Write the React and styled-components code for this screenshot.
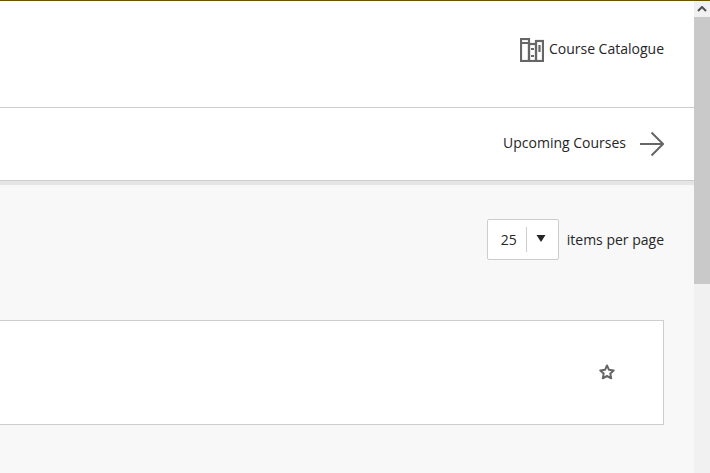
import React from 'react';
import styled, { createGlobalStyle } from 'styled-components';

const Global = createGlobalStyle`
  html, body { margin: 0; padding: 0; height: 100%; overflow: hidden; }
  #root { height: 100%; }
  * { box-sizing: border-box; }
`;
const Frame = styled.div`
  display: flex; width: 710px; height: 473px; overflow: hidden; border-top: 1px solid #6b5500;
  font-family: "Open Sans", sans-serif; font-size: 14px; color: #262626;
`;
const Page = styled.main`
  flex: 1; display: flex; flex-direction: column; min-width: 0; background: #f8f8f8;
`;
const TopBar = styled.header`
  height: 107px; flex: none; display: flex; justify-content: flex-end; align-items: flex-start;
  padding: 37px 30px 0 0; background: #fff; border-bottom: 1px solid #cdcdcd;
`;
const IconLink = styled.a`
  display: flex; align-items: center; gap: 5px; height: 24px;
`;
const LinkText = styled.span`
  line-height: 20px; margin-top: -2px;
`;
const Tabs = styled.nav`
  height: 77px; flex: none; display: flex; justify-content: flex-end; align-items: center;
  padding: 0 30px 1px 0; gap: 13px; background: #fff; border-bottom: 4px solid #e5e5e5;
  box-shadow: inset 0 -1px 0 #cdcdcd;
`;
const TabText = styled.span`
  line-height: 20px; margin-top: -2px;
`;
const Content = styled.section`
  flex: 1; display: flex; flex-direction: column; padding: 34px 30px 0 0;
`;
const Pager = styled.div`
  display: flex; justify-content: flex-end; align-items: center; gap: 8px; height: 41px;
`;
const Select = styled.div`
  width: 72px; height: 41px; display: flex; align-items: center;
  background: #fff; border: 1px solid #cdcdcd; border-radius: 2px;
`;
const Value = styled.span`
  width: 39px; text-align: center; border-right: 1px solid #cdcdcd; line-height: 25px; padding-left: 4px;
`;
const Caret = styled.span`
  flex: 1; display: flex; justify-content: center; margin: -3px 2px 0 0;
`;
const Card = styled.article`
  margin-top: 60px; height: 105px; margin-left: -10px; display: flex; justify-content: flex-end;
  align-items: center; padding: 0 48px 2px 0; background: #fff; border: 1px solid #cdcdcd;
`;
const Scrollbar = styled.aside`
  width: 16px; flex: none; display: flex; flex-direction: column; background: #f1f1f1;
`;
const ArrowButton = styled.div`
  height: 16px; flex: none; display: flex; align-items: center; justify-content: center;
`;
const Thumb = styled.div`
  height: 267px; flex: none; background: #c9c9c9;
`;

export default function App() {
  return (
    <Frame>
      <Global />
      <Page>
        <TopBar>
          <IconLink>
            <svg width="24" height="24" viewBox="0 0 24 24" fill="none" stroke="#666" strokeWidth="2.200">
              <rect x="1" y="1" width="8" height="22" />
              <rect x="9" y="6" width="7" height="17" />
              <rect x="16" y="3" width="7" height="20" />
              <path d="M1 5h8M11 11h3M11 18h3M19.500 7v7" />
            </svg>
            <LinkText>Course Catalogue</LinkText>
          </IconLink>
        </TopBar>
        <Tabs>
          <TabText>Upcoming Courses</TabText>
          <svg width="25" height="26" viewBox="0 0 25 26" fill="none" stroke="#666" strokeWidth="2">
            <path d="M1 13h23M12.500 1.500 24 13 12.500 24.500" />
          </svg>
        </Tabs>
        <Content>
          <Pager>
            <Select>
              <Value>25</Value>
              <Caret>
                <svg width="10" height="7" viewBox="0 0 10 7"><path d="M0.500 0h9L5 7z" fill="#262626" /></svg>
              </Caret>
            </Select>
            items per page
          </Pager>
          <Card>
            <svg width="16" height="16" viewBox="0 0 16 16" fill="none" stroke="#666" strokeWidth="2" strokeLinejoin="round">
              <path d="M8 1.500l2 4.300 4.700.6-3.400 3.200.9 4.700L8 12l-4.200 2.300.9-4.700L1.300 6.400 6 5.800z" />
            </svg>
          </Card>
        </Content>
      </Page>
      <Scrollbar>
        <ArrowButton>
          <svg width="10" height="6" viewBox="0 0 10 6" fill="none" stroke="#505050" strokeWidth="2"><path d="M1 5l4-4 4 4" /></svg>
        </ArrowButton>
        <Thumb />
      </Scrollbar>
    </Frame>
  );
}
